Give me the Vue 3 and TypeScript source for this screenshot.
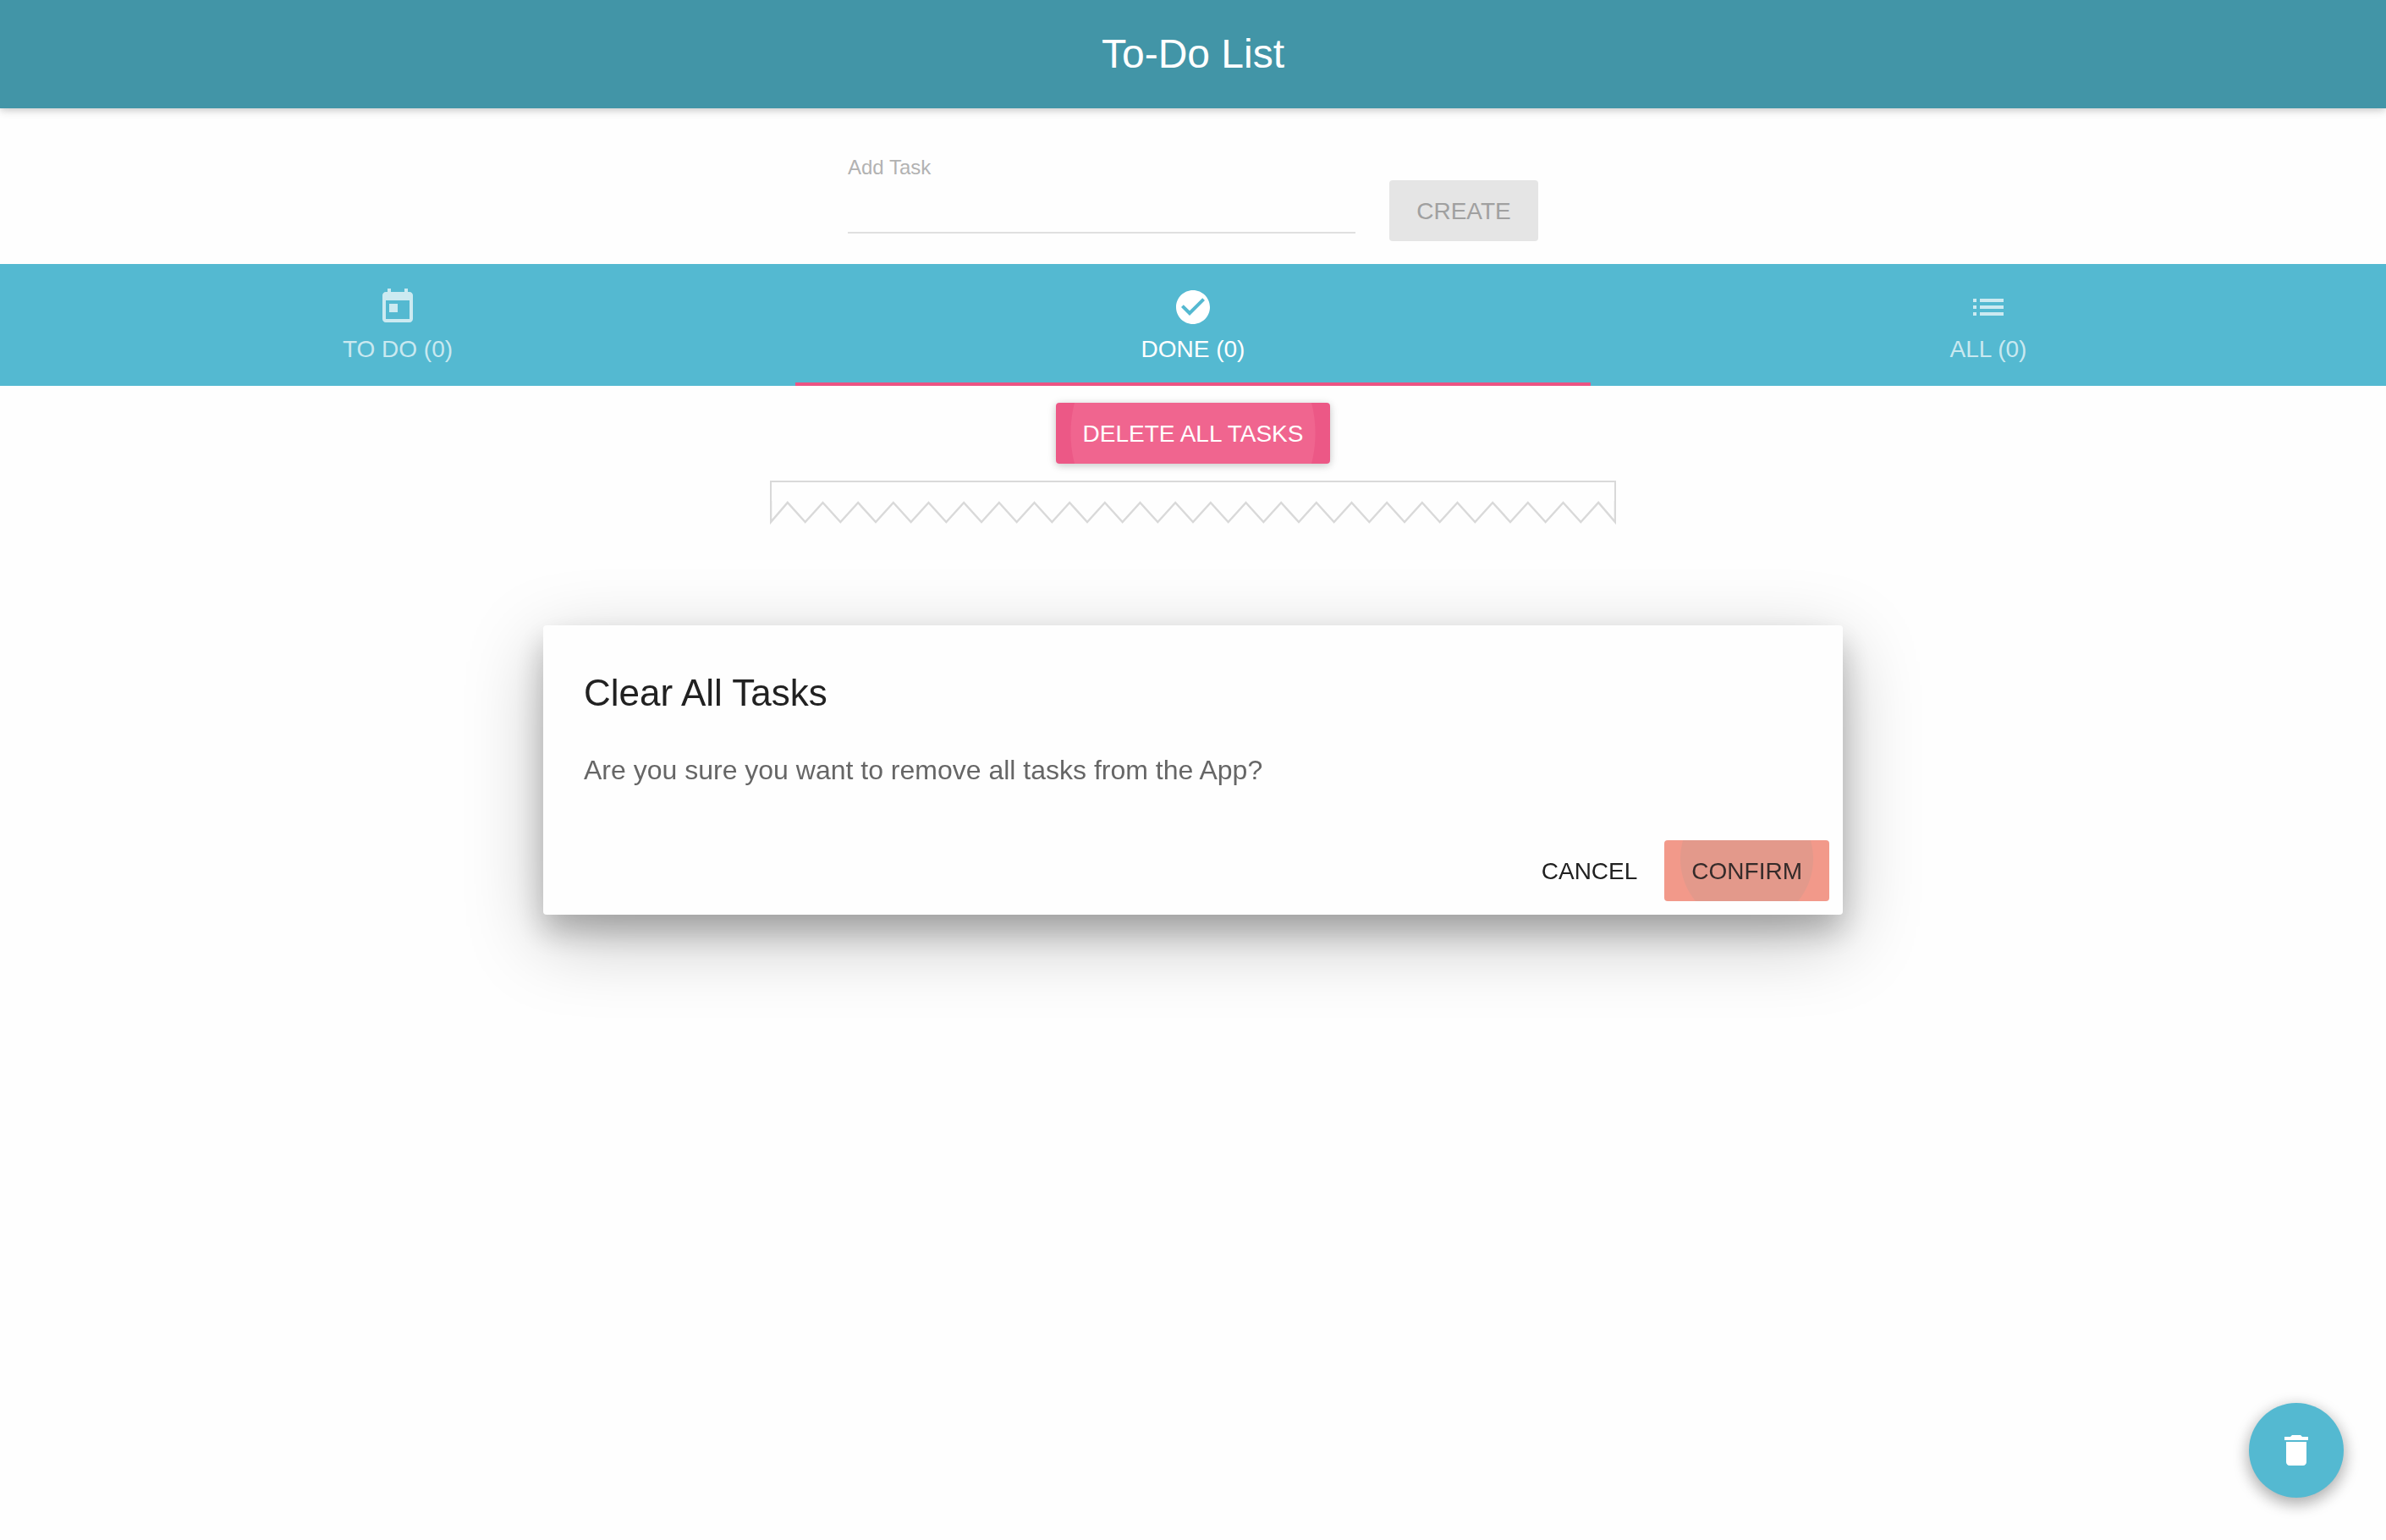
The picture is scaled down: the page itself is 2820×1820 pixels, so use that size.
<script setup lang="ts">
import { computed, ref } from 'vue'

interface Task {
  id: number
  title: string
  done: boolean
}

type TabKey = 'todo' | 'done' | 'all'

const tasks = ref<Task[]>([])
const draft = ref('')
const activeTab = ref<TabKey>('done')
const dialogOpen = ref(true)

const tabs = computed(() => [
  {
    key: 'todo' as TabKey,
    label: 'TO DO',
    count: tasks.value.filter((t) => !t.done).length,
    icon: 'M19 3h-1V1h-2v2H8V1H6v2H5c-1.11 0-1.99.9-1.99 2L3 19c0 1.1.89 2 2 2h14c1.1 0 2-.9 2-2V5c0-1.1-.9-2-2-2zm0 16H5V8h14v11zM7 10h5v5H7z',
  },
  {
    key: 'done' as TabKey,
    label: 'DONE',
    count: tasks.value.filter((t) => t.done).length,
    icon: 'M12 2C6.48 2 2 6.48 2 12s4.48 10 10 10 10-4.48 10-10S17.52 2 12 2zm-2 15l-5-5 1.41-1.41L10 14.17l7.59-7.59L19 8l-9 9z',
  },
  {
    key: 'all' as TabKey,
    label: 'ALL',
    count: tasks.value.length,
    icon: 'M3 13h2v-2H3v2zm0 4h2v-2H3v2zm0-8h2V7H3v2zm4 4h14v-2H7v2zm0 4h14v-2H7v2zM7 7v2h14V7H7z',
  },
])

const visibleTasks = computed(() =>
  tasks.value.filter((t) => activeTab.value === 'all' || t.done === (activeTab.value === 'done')),
)

// Torn lower edge of the list: 24 teeth across a 1000-unit width.
const TEETH = 24
const zigzag = computed(() => {
  const step = 1000 / TEETH
  let d = 'M1 0V25'
  for (let i = 0; i < TEETH; i++) {
    const valley = i === TEETH - 1 ? 999 : (i + 1) * step
    d += `L${((i + 0.5) * step).toFixed(2)} 2L${valley.toFixed(2)} 25`
  }
  return d + 'V0'
})

function addTask() {
  const title = draft.value.trim()
  if (!title) return
  tasks.value.push({ id: Date.now(), title, done: false })
  draft.value = ''
}

function clearTasks() {
  tasks.value = []
  dialogOpen.value = false
}
</script>

<template>
  <div class="app">
    <header class="app-bar">
      <h1>To-Do List</h1>
    </header>

    <form class="add-form" @submit.prevent="addTask">
      <div class="field">
        <label for="new-task">Add Task</label>
        <input id="new-task" v-model="draft" type="text" autocomplete="off" />
      </div>
      <button class="btn create" type="submit" :disabled="!draft.trim()">CREATE</button>
    </form>

    <nav class="tabs" role="tablist">
      <button
        v-for="tab in tabs"
        :key="tab.key"
        class="tab"
        :class="{ active: tab.key === activeTab }"
        type="button"
        role="tab"
        :aria-selected="tab.key === activeTab"
        @click="activeTab = tab.key"
      >
        <svg class="icon" viewBox="0 0 24 24" aria-hidden="true"><path :d="tab.icon" /></svg>
        <span>{{ tab.label }} ({{ tab.count }})</span>
      </button>
    </nav>

    <main class="content">
      <button class="btn delete" type="button" @click="dialogOpen = true">DELETE ALL TASKS</button>
      <div class="sheet">
        <ul class="list">
          <li v-for="task in visibleTasks" :key="task.id">{{ task.title }}</li>
        </ul>
        <svg class="torn" viewBox="0 0 1000 28" aria-hidden="true"><path :d="zigzag" /></svg>
      </div>
    </main>

    <button class="fab" type="button" aria-label="Clear all tasks" @click="dialogOpen = true">
      <svg class="icon" viewBox="0 0 24 24" aria-hidden="true">
        <path d="M6 19c0 1.1.9 2 2 2h8c1.1 0 2-.9 2-2V7H6v12zM19 4h-3.5l-1-1h-5l-1 1H5v2h14V4z" />
      </svg>
    </button>

    <div v-if="dialogOpen" class="overlay">
      <section class="dialog" role="dialog" aria-labelledby="dialog-title">
        <h2 id="dialog-title">Clear All Tasks</h2>
        <p>Are you sure you want to remove all tasks from the App?</p>
        <div class="actions">
          <button class="btn cancel" type="button" @click="dialogOpen = false">CANCEL</button>
          <button class="btn confirm" type="button" @click="clearTasks">CONFIRM</button>
        </div>
      </section>
    </div>
  </div>
</template>

<style>
body {
  background: #fefefe;
}
</style>

<style scoped>
.app {
  font-family: "Liberation Sans", Arial, Helvetica, sans-serif;
  color: #212121;
}

button,
input {
  box-sizing: border-box;
  margin: 0;
  border: 0;
  font: inherit;
  outline: none;
}

.app-bar {
  position: relative;
  background: #4295a7;
  box-shadow: 0 2px 12px rgba(0, 0, 0, 0.12), 0 2px 8px rgba(0, 0, 0, 0.12);
}

.app-bar h1 {
  margin: 0;
  font-size: 48px;
  font-weight: 400;
  line-height: 128px;
  text-align: center;
  color: #fff;
}

.add-form {
  display: flex;
  justify-content: center;
  align-items: flex-end;
  gap: 40px;
  padding: 56px 24px 27px;
}

.field {
  display: flex;
  flex-direction: column;
  flex: 0 1 600px;
  margin-bottom: 9px;
}

.field label {
  font-size: 24px;
  line-height: 28px;
  color: #b2b2b2;
}

.field input {
  width: 100%;
  height: 64px;
  padding: 0;
  border-bottom: 2px solid #e0e0e0;
  background: transparent;
  font-size: 32px;
}

.btn {
  height: 72px;
  min-width: 176px;
  padding: 2px 32px 0;
  border-radius: 4px;
  font-size: 28px;
  line-height: 32px;
  white-space: nowrap;
  cursor: pointer;
}

.create:disabled {
  background: #e5e5e5;
  color: #a0a0a0;
  cursor: default;
}

.tabs {
  display: flex;
  background: #54b9d1;
}

.tab {
  position: relative;
  display: flex;
  flex: 1;
  flex-direction: column;
  align-items: center;
  gap: 10px;
  padding: 27px 24px;
  background: transparent;
  font-size: 28px;
  line-height: 32px;
  color: rgba(255, 255, 255, 0.7);
  cursor: pointer;
}

.tab.active {
  color: #fff;
}

.tab.active::after {
  content: "";
  position: absolute;
  right: 0;
  bottom: 0;
  left: 0;
  height: 4px;
  background: #ec5382;
}

.icon {
  display: block;
  width: 48px;
  height: 48px;
  fill: currentColor;
}

.content {
  display: flex;
  flex-direction: column;
  align-items: center;
  gap: 20px;
  padding: 20px 0;
}

.delete {
  background: radial-gradient(circle, #f0658f 144px, #ec5886 145px);
  box-shadow: 0 2px 12px rgba(0, 0, 0, 0.12), 0 2px 8px rgba(0, 0, 0, 0.12);
  color: #fff;
}

.sheet {
  width: 100%;
  max-width: 1000px;
}

.list {
  margin: 0;
  padding: 22px 32px 0;
  border: solid #d9d9d9;
  border-width: 2px 2px 0;
  list-style: none;
  font-size: 32px;
}

.torn {
  display: block;
  width: 100%;
  fill: none;
  stroke: #d9d9d9;
  stroke-width: 2.5;
}

.fab {
  position: fixed;
  right: 50px;
  bottom: 50px;
  display: grid;
  place-items: center;
  width: 112px;
  height: 112px;
  padding: 0;
  border-radius: 50%;
  background: #54b9d1;
  box-shadow: 0 6px 20px rgba(0, 0, 0, 0.16), 0 6px 20px rgba(0, 0, 0, 0.23);
  color: #fff;
  cursor: pointer;
}

.overlay {
  position: fixed;
  inset: 0;
  display: grid;
  place-items: center;
  pointer-events: none;
}

.dialog {
  width: 75%;
  max-width: 1536px;
  border-radius: 4px;
  background: #fefefe;
  box-shadow: 0 28px 90px rgba(0, 0, 0, 0.25), 0 20px 36px rgba(0, 0, 0, 0.22);
  pointer-events: auto;
}

.dialog h2 {
  margin: 0;
  padding: 48px 48px 40px;
  font-size: 44px;
  font-weight: 400;
  line-height: 64px;
}

.dialog p {
  margin: 0;
  padding: 0 48px 48px;
  font-size: 32px;
  line-height: 38px;
  color: #666;
}

.actions {
  display: flex;
  justify-content: flex-end;
  padding: 16px;
}

.cancel {
  background: transparent;
  color: #212121;
}

.confirm {
  background: radial-gradient(circle at 50% 22px, #e3998b 78px, #f2998a 79px);
  color: #352b2a;
}
</style>
